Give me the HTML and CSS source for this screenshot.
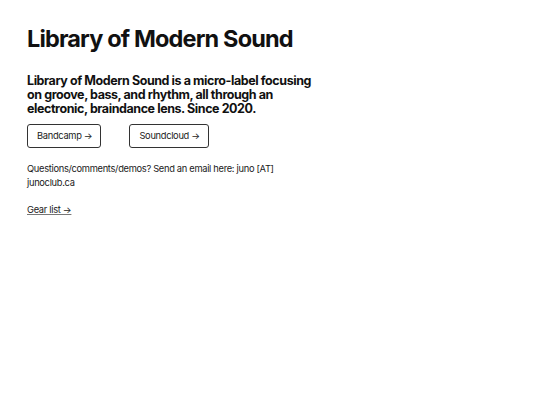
FILE: index.html
```
<!DOCTYPE html>
<html>
<head>
<meta charset="utf-8">
<link rel="stylesheet" href="styles.css">
</head>
<body>
<main class="page">
  <h1 class="title">Library of Modern Sound</h1>
  <p class="intro">Library of Modern Sound is a micro-label focusing on groove, bass, and rhythm, all through an electronic, braindance lens. Since 2020.</p>
  <div class="links">
    <a class="btn" href="#">Bandcamp →</a>
    <a class="btn" href="#">Soundcloud →</a>
  </div>
  <p class="contact">Questions/comments/demos? Send an email here: juno [AT] junoclub.ca</p>
  <a class="gear" href="#">Gear list →</a>
</main>
</body>
</html>
```
FILE: styles.css
```
html, body {
  margin: 0;
  padding: 0;
  background: #fff;
}
body {
  font-family: Inter, "Noto Sans", sans-serif;
  color: #111;
}
.page {
  padding: 25px 27px;
  width: 290px;
}
.title {
  margin: 0;
  font-size: 23.5px;
  font-weight: 700;
  letter-spacing: -0.85px;
  line-height: 28px;
}
.intro {
  margin: 21px 0 0;
  font-size: 12.5px;
  font-weight: 700;
  line-height: 14px;
  letter-spacing: -0.42px;
}
.links {
  display: flex;
  gap: 28px;
  margin-top: 8px;
}
.btn {
  display: inline-block;
  border: 1px solid #333;
  border-radius: 3px;
  padding: 0 8px 0 9px;
  height: 22px;
  line-height: 22px;
  font-size: 9.3px;
  letter-spacing: -0.3px;
  color: #1a1a1a;
  text-decoration: none;
}
.contact {
  margin: 14px 0 0;
  font-size: 9.3px;
  line-height: 14px;
  letter-spacing: -0.3px;
  color: #1a1a1a;
}
.gear {
  display: inline-block;
  margin-top: 13px;
  font-size: 9.3px;
  line-height: 14px;
  letter-spacing: -0.3px;
  color: #1a1a1a;
  text-decoration-color: #777;
}
```
